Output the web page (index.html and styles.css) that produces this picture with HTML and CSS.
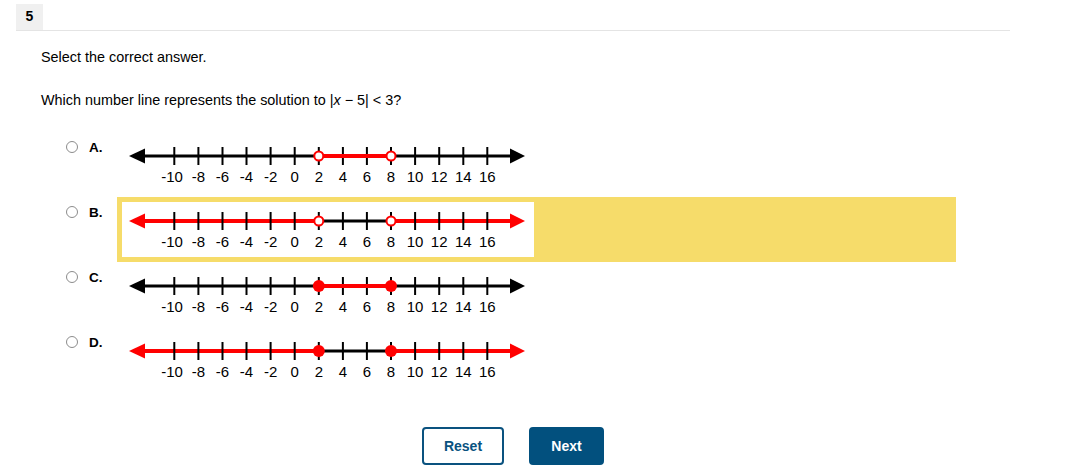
FILE: index.html
```html
<!DOCTYPE html>
<html>
<head>
<meta charset="utf-8">
<link rel="stylesheet" href="styles.css">
</head>
<body>
<div class="page">
  <div class="header"><div class="qnum">5</div></div>
  <div class="content">
    <p class="instr">Select the correct answer.</p>
    <p class="question">Which number line represents the solution to |<i>x</i> − 5| &lt; 3?</p>
    <div class="options">
      <div class="opt">
        <span class="radio"></span><span class="label">A.</span>
        <div class="answer">
          <svg class="nl" width="412" height="55" viewBox="0 0 412 55">
            <line class="axis" x1="20" y1="19" x2="392" y2="19"/>
            <polygon class="head" points="7,19 23,11.5 23,26.5"/>
            <polygon class="head" points="403,19 388,11.5 388,26.5"/>
            <g class="ticks">
              <line x1="52.3" y1="10" x2="52.3" y2="28"/><line x1="76.4" y1="10" x2="76.4" y2="28"/><line x1="100.5" y1="10" x2="100.5" y2="28"/><line x1="124.5" y1="10" x2="124.5" y2="28"/><line x1="148.6" y1="10" x2="148.6" y2="28"/><line x1="172.7" y1="10" x2="172.7" y2="28"/><line x1="196.8" y1="10" x2="196.8" y2="28"/><line x1="220.9" y1="10" x2="220.9" y2="28"/><line x1="244.9" y1="10" x2="244.9" y2="28"/><line x1="269" y1="10" x2="269" y2="28"/><line x1="293.1" y1="10" x2="293.1" y2="28"/><line x1="317.2" y1="10" x2="317.2" y2="28"/><line x1="341.3" y1="10" x2="341.3" y2="28"/><line x1="365.3" y1="10" x2="365.3" y2="28"/>
            </g>
            <line class="seg" x1="196.8" y1="19" x2="269" y2="19"/>
            <circle class="open" cx="196.8" cy="19" r="4.5"/>
            <circle class="open" cx="269" cy="19" r="4.5"/>
            <g class="nums">
              <text x="50" y="45">-10</text><text x="76.4" y="45">-8</text><text x="100.5" y="45">-6</text><text x="124.5" y="45">-4</text><text x="148.6" y="45">-2</text><text x="172.7" y="45">0</text><text x="196.8" y="45">2</text><text x="220.9" y="45">4</text><text x="244.9" y="45">6</text><text x="269" y="45">8</text><text x="293.1" y="45">10</text><text x="317.2" y="45">12</text><text x="341.3" y="45">14</text><text x="365.3" y="45">16</text>
            </g>
          </svg>
        </div>
      </div>
      <div class="opt">
        <span class="radio"></span><span class="label">B.</span>
        <div class="answer selected">
          <svg class="nl" width="412" height="55" viewBox="0 0 412 55">
            <line class="axis" x1="20" y1="19" x2="392" y2="19"/>
            <line class="seg" x1="20" y1="19" x2="196.8" y2="19"/>
            <line class="seg" x1="269" y1="19" x2="392" y2="19"/>
            <polygon class="head red" points="7,19 23,11.5 23,26.5"/>
            <polygon class="head red" points="403,19 388,11.5 388,26.5"/>
            <g class="ticks">
              <line x1="52.3" y1="10" x2="52.3" y2="28"/><line x1="76.4" y1="10" x2="76.4" y2="28"/><line x1="100.5" y1="10" x2="100.5" y2="28"/><line x1="124.5" y1="10" x2="124.5" y2="28"/><line x1="148.6" y1="10" x2="148.6" y2="28"/><line x1="172.7" y1="10" x2="172.7" y2="28"/><line x1="196.8" y1="10" x2="196.8" y2="28"/><line x1="220.9" y1="10" x2="220.9" y2="28"/><line x1="244.9" y1="10" x2="244.9" y2="28"/><line x1="269" y1="10" x2="269" y2="28"/><line x1="293.1" y1="10" x2="293.1" y2="28"/><line x1="317.2" y1="10" x2="317.2" y2="28"/><line x1="341.3" y1="10" x2="341.3" y2="28"/><line x1="365.3" y1="10" x2="365.3" y2="28"/>
            </g>
            <circle class="open" cx="196.8" cy="19" r="4.5"/>
            <circle class="open" cx="269" cy="19" r="4.5"/>
            <g class="nums">
              <text x="50" y="45">-10</text><text x="76.4" y="45">-8</text><text x="100.5" y="45">-6</text><text x="124.5" y="45">-4</text><text x="148.6" y="45">-2</text><text x="172.7" y="45">0</text><text x="196.8" y="45">2</text><text x="220.9" y="45">4</text><text x="244.9" y="45">6</text><text x="269" y="45">8</text><text x="293.1" y="45">10</text><text x="317.2" y="45">12</text><text x="341.3" y="45">14</text><text x="365.3" y="45">16</text>
            </g>
          </svg>
        </div>
      </div>
      <div class="opt">
        <span class="radio"></span><span class="label">C.</span>
        <div class="answer">
          <svg class="nl" width="412" height="55" viewBox="0 0 412 55">
            <line class="axis" x1="20" y1="19" x2="392" y2="19"/>
            <polygon class="head" points="7,19 23,11.5 23,26.5"/>
            <polygon class="head" points="403,19 388,11.5 388,26.5"/>
            <g class="ticks">
              <line x1="52.3" y1="10" x2="52.3" y2="28"/><line x1="76.4" y1="10" x2="76.4" y2="28"/><line x1="100.5" y1="10" x2="100.5" y2="28"/><line x1="124.5" y1="10" x2="124.5" y2="28"/><line x1="148.6" y1="10" x2="148.6" y2="28"/><line x1="172.7" y1="10" x2="172.7" y2="28"/><line x1="196.8" y1="10" x2="196.8" y2="28"/><line x1="220.9" y1="10" x2="220.9" y2="28"/><line x1="244.9" y1="10" x2="244.9" y2="28"/><line x1="269" y1="10" x2="269" y2="28"/><line x1="293.1" y1="10" x2="293.1" y2="28"/><line x1="317.2" y1="10" x2="317.2" y2="28"/><line x1="341.3" y1="10" x2="341.3" y2="28"/><line x1="365.3" y1="10" x2="365.3" y2="28"/>
            </g>
            <line class="seg" x1="196.8" y1="19" x2="269" y2="19"/>
            <circle class="dot" cx="196.8" cy="19" r="6"/>
            <circle class="dot" cx="269" cy="19" r="6"/>
            <g class="nums">
              <text x="50" y="45">-10</text><text x="76.4" y="45">-8</text><text x="100.5" y="45">-6</text><text x="124.5" y="45">-4</text><text x="148.6" y="45">-2</text><text x="172.7" y="45">0</text><text x="196.8" y="45">2</text><text x="220.9" y="45">4</text><text x="244.9" y="45">6</text><text x="269" y="45">8</text><text x="293.1" y="45">10</text><text x="317.2" y="45">12</text><text x="341.3" y="45">14</text><text x="365.3" y="45">16</text>
            </g>
          </svg>
        </div>
      </div>
      <div class="opt">
        <span class="radio"></span><span class="label">D.</span>
        <div class="answer">
          <svg class="nl" width="412" height="55" viewBox="0 0 412 55">
            <line class="axis" x1="20" y1="19" x2="392" y2="19"/>
            <line class="seg" x1="20" y1="19" x2="196.8" y2="19"/>
            <line class="seg" x1="269" y1="19" x2="392" y2="19"/>
            <polygon class="head red" points="7,19 23,11.5 23,26.5"/>
            <polygon class="head red" points="403,19 388,11.5 388,26.5"/>
            <g class="ticks">
              <line x1="52.3" y1="10" x2="52.3" y2="28"/><line x1="76.4" y1="10" x2="76.4" y2="28"/><line x1="100.5" y1="10" x2="100.5" y2="28"/><line x1="124.5" y1="10" x2="124.5" y2="28"/><line x1="148.6" y1="10" x2="148.6" y2="28"/><line x1="172.7" y1="10" x2="172.7" y2="28"/><line x1="196.8" y1="10" x2="196.8" y2="28"/><line x1="220.9" y1="10" x2="220.9" y2="28"/><line x1="244.9" y1="10" x2="244.9" y2="28"/><line x1="269" y1="10" x2="269" y2="28"/><line x1="293.1" y1="10" x2="293.1" y2="28"/><line x1="317.2" y1="10" x2="317.2" y2="28"/><line x1="341.3" y1="10" x2="341.3" y2="28"/><line x1="365.3" y1="10" x2="365.3" y2="28"/>
            </g>
            <circle class="dot" cx="196.8" cy="19" r="6"/>
            <circle class="dot" cx="269" cy="19" r="6"/>
            <g class="nums">
              <text x="50" y="45">-10</text><text x="76.4" y="45">-8</text><text x="100.5" y="45">-6</text><text x="124.5" y="45">-4</text><text x="148.6" y="45">-2</text><text x="172.7" y="45">0</text><text x="196.8" y="45">2</text><text x="220.9" y="45">4</text><text x="244.9" y="45">6</text><text x="269" y="45">8</text><text x="293.1" y="45">10</text><text x="317.2" y="45">12</text><text x="341.3" y="45">14</text><text x="365.3" y="45">16</text>
            </g>
          </svg>
        </div>
      </div>
    </div>
  </div>
  <div class="buttons">
    <button class="btn reset">Reset</button>
    <button class="btn next">Next</button>
  </div>
</div>
</body>
</html>
```

FILE: styles.css
```css
html, body {
  margin: 0;
  padding: 0;
  background: #ffffff;
}
body {
  font-family: "Liberation Sans", Arial, sans-serif;
  color: #000000;
  font-size: 14.4px;
}
.page {
  margin-left: 16px;
  width: 994px;
  padding-top: 4px;
}
.header {
  border-bottom: 1px solid #e4e4e4;
  height: 26px;
}
.qnum {
  width: 27px;
  height: 26px;
  background: #f0f0f0;
  font-weight: bold;
  font-size: 14px;
  line-height: 24px;
  text-align: center;
}
.content {
  padding-left: 25px;
}
.instr {
  margin: 18px 0 0 0;
  line-height: 17px;
}
.question {
  margin: 26px 0 0 0;
  line-height: 17px;
}
.options {
  margin-top: 23px;
  margin-left: 25px;
  display: flex;
  flex-direction: column;
}
.opt {
  display: flex;
  align-items: flex-start;
}
.radio {
  width: 10px;
  height: 10px;
  border: 1px solid #8c8c8c;
  border-radius: 50%;
  background: #fff;
  margin-top: 9px;
  flex: none;
}
.label {
  font-weight: bold;
  font-size: 13.5px;
  line-height: 15px;
  margin-top: 8px;
  margin-left: 11px;
  width: 28px;
  flex: none;
}
.answer {
  width: 829px;
  padding: 5px;
  display: flex;
}
.answer.selected {
  background: #f6dc6a;
}
.nl {
  display: block;
  background: #ffffff;
}
.axis {
  stroke: #000;
  stroke-width: 3;
}
.head {
  fill: #000;
}
.head.red {
  fill: #ff0000;
}
.ticks line {
  stroke: #000;
  stroke-width: 2;
}
.seg {
  stroke: #ff0000;
  stroke-width: 4;
}
.open {
  fill: #ffffff;
  stroke: #ff0000;
  stroke-width: 2;
}
.dot {
  fill: #ff0000;
}
.nums text {
  font-family: "Liberation Sans", Arial, sans-serif;
  font-size: 15px;
  fill: #000;
  text-anchor: middle;
}
.buttons {
  display: flex;
  justify-content: center;
  gap: 25px;
  margin-top: 35px;
}
.btn {
  height: 38px;
  font-family: "Liberation Sans", Arial, sans-serif;
  font-weight: bold;
  font-size: 14px;
  border-radius: 4px;
  padding: 0;
  cursor: pointer;
}
.reset {
  width: 82px;
  background: #ffffff;
  color: #0a527f;
  border: 2px solid #0a527f;
}
.next {
  width: 75px;
  background: #02507e;
  color: #ffffff;
  border: 2px solid #02507e;
}
```
